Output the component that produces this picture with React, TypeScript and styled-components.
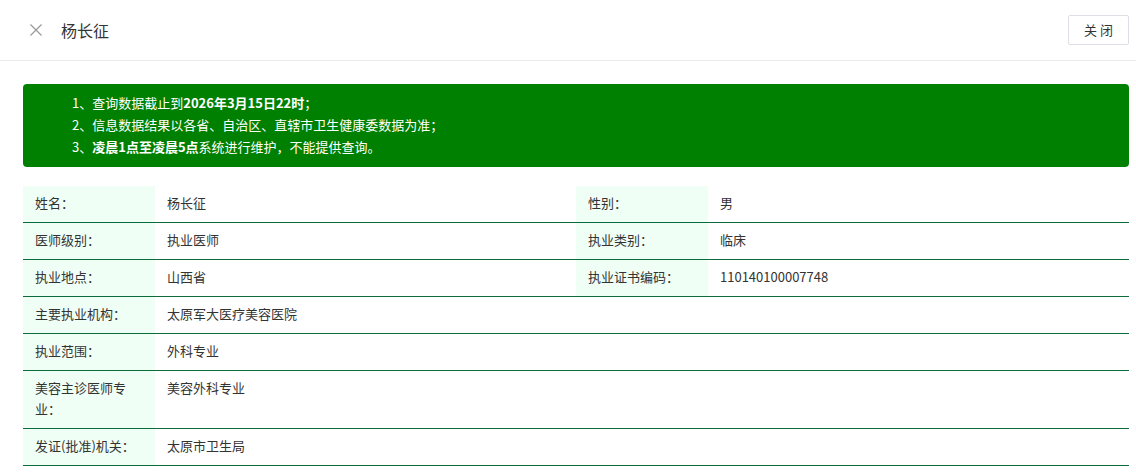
import React from 'react';
import styled, { createGlobalStyle } from 'styled-components';

const GlobalStyle = createGlobalStyle`
  html, body {
    margin: 0;
    padding: 0;
    background: #ffffff;
  }
  body {
    font-family: 'Noto Sans CJK SC', 'Liberation Sans', sans-serif;
    color: #333333;
  }
`;

type Cell = { label: string; value: string };
type Row = Cell[];

const ROWS: Row[] = [
  [
    { label: '姓名：', value: '杨长征' },
    { label: '性别：', value: '男' },
  ],
  [
    { label: '医师级别：', value: '执业医师' },
    { label: '执业类别：', value: '临床' },
  ],
  [
    { label: '执业地点：', value: '山西省' },
    { label: '执业证书编码：', value: '110140100007748' },
  ],
  [{ label: '主要执业机构：', value: '太原军大医疗美容医院' }],
  [{ label: '执业范围：', value: '外科专业' }],
  [{ label: '美容主诊医师专业：', value: '美容外科专业' }],
  [{ label: '发证(批准)机关：', value: '太原市卫生局' }],
];

const CloseIcon: React.FC = () => (
  <svg width="12" height="12" viewBox="0 0 12 12" fill="none">
    <path d="M0.5 0.5L11.5 11.5M11.5 0.5L0.5 11.5" stroke="#999" strokeWidth="1.2" />
  </svg>
);

const App: React.FC = () => {
  return (
    <Page>
      <GlobalStyle />
      <Header>
        <HeaderLeft>
          <IconButton>
            <CloseIcon />
          </IconButton>
          <Title>杨长征</Title>
        </HeaderLeft>
        <CloseButton>关 闭</CloseButton>
      </Header>

      <Body>
        <Notice>
          <NoticeLine>
            1、查询数据截止到<b>2026年3月15日22时</b>；
          </NoticeLine>
          <NoticeLine>2、信息数据结果以各省、自治区、直辖市卫生健康委数据为准；</NoticeLine>
          <NoticeLine>
            3、<b>凌晨1点至凌晨5点</b>系统进行维护，不能提供查询。
          </NoticeLine>
        </Notice>

        <InfoTable>
          <colgroup>
            <col style={{ width: 132 }} />
            <col style={{ width: 421 }} />
            <col style={{ width: 132 }} />
            <col style={{ width: 421 }} />
          </colgroup>
          <tbody>
            {ROWS.map((row, i) => (
              <tr key={i}>
                {row.map((cell) => (
                  <React.Fragment key={cell.label}>
                    <LabelCell>{cell.label}</LabelCell>
                    <ValueCell colSpan={row.length === 1 ? 3 : 1}>{cell.value}</ValueCell>
                  </React.Fragment>
                ))}
              </tr>
            ))}
          </tbody>
        </InfoTable>
      </Body>
    </Page>
  );
};

export default App;

const Page = styled.div`
  width: 1136px;
  min-height: 475px;
  background: #ffffff;
`;

const Header = styled.div`
  height: 61px;
  padding: 0 7px 0 30px;
  box-sizing: border-box;
  border-bottom: 1px solid #ebebeb;

  display: flex;
  align-items: center;
  justify-content: space-between;
`;

const HeaderLeft = styled.div`
  display: flex;
  align-items: center;
  gap: 19px;
`;

const IconButton = styled.span`
  width: 12px;
  height: 12px;
  display: flex;
  cursor: pointer;
`;

const Title = styled.span`
  font-size: 16px;
  color: #333333;
  line-height: 20px;
`;

const CloseButton = styled.button`
  width: 61px;
  height: 30px;
  margin-top: -1px;
  padding: 0;

  border: 1px solid #dcdfe6;
  border-radius: 2px;
  background: #ffffff;

  font-family: 'Noto Sans CJK SC', 'Liberation Sans', sans-serif;
  font-size: 13px;
  color: #333333;
  cursor: pointer;
`;

const Body = styled.div`
  padding: 23px 7px 0 23px;
`;

const Notice = styled.div`
  padding: 8px 0 9px 49px;
  border-radius: 4px;
  background: #008000;
`;

const NoticeLine = styled.div`
  font-size: 13px;
  line-height: 22px;
  color: #ffffff;

  b {
    font-weight: 700;
  }
`;

const InfoTable = styled.table`
  width: 1106px;
  margin-top: 19px;
  border-collapse: collapse;
  table-layout: fixed;
`;

const LabelCell = styled.td`
  padding: 6px 12px 9px;
  background: #f0fff6;
  border-bottom: 1px solid #0b6b3a;
  vertical-align: top;

  font-size: 13px;
  line-height: 21px;
  color: #333333;
`;

const ValueCell = styled.td`
  padding: 6px 12px 9px;
  border-bottom: 1px solid #0b6b3a;
  vertical-align: top;

  font-size: 13px;
  line-height: 21px;
  color: #333333;
`;
